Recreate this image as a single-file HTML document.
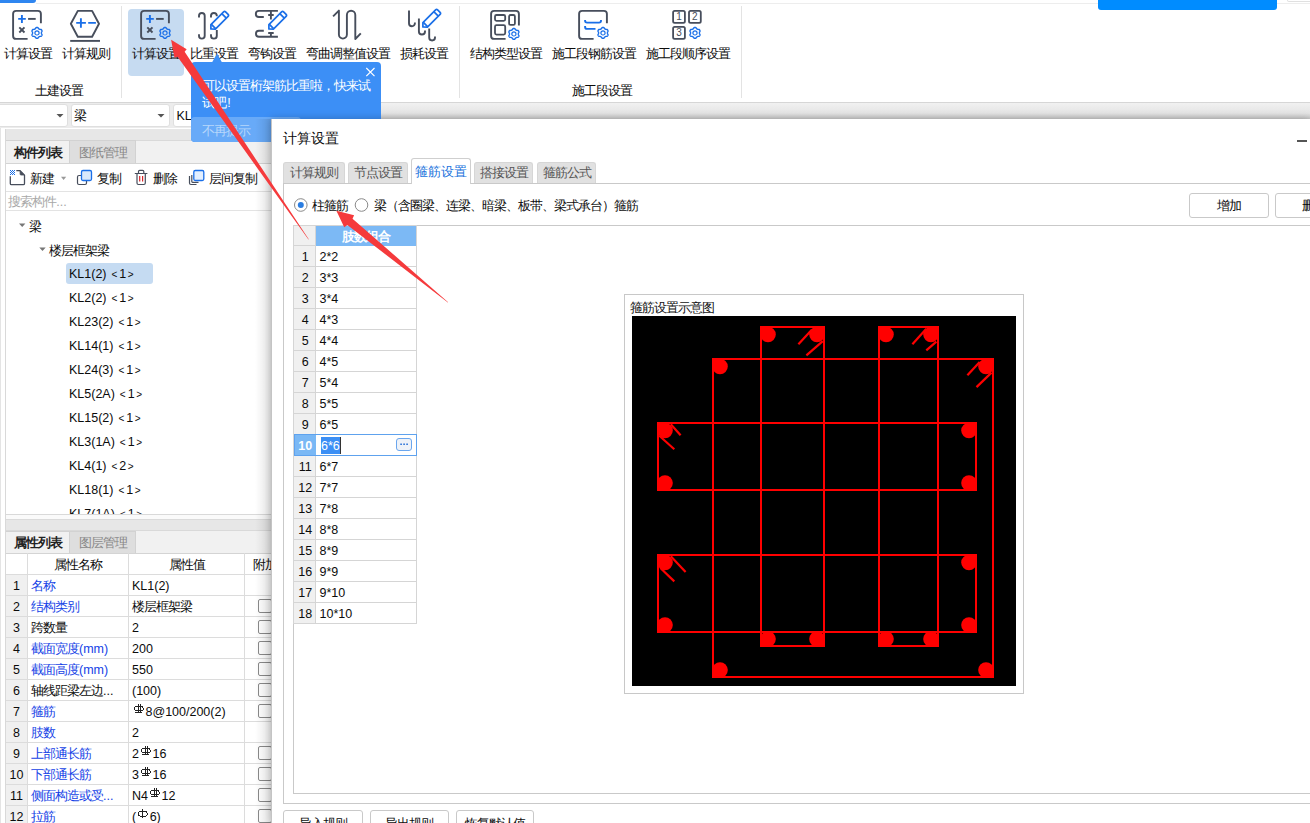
<!DOCTYPE html><html><head><meta charset="utf-8"><style>
*{box-sizing:border-box;margin:0;padding:0}
html,body{width:1310px;height:823px;overflow:hidden}
body{position:relative;background:#fff;font-family:"Liberation Sans",sans-serif;font-size:12.5px;color:#0c0c0c}
.a{position:absolute}
.t{position:absolute;white-space:nowrap;line-height:14px}
.c{letter-spacing:-1px}
.t[style*=bold] .c{-webkit-text-stroke:0}
.ab{font-size:10px;margin:0 2px 0 1.5px}
.sy{vertical-align:0;position:relative;top:-2px;margin:0 1.5px 0 2px;shape-rendering:crispEdges}
.ph{font-size:9px;position:relative;top:-3px;margin-right:1px}
</style></head><body>
<div class="a" style="left:0px;top:0px;width:36px;height:3px;background:#2f86f0;border-bottom-right-radius:3px"></div>
<div class="a" style="left:36px;top:3px;width:1274px;height:1px;background:#ededed"></div>
<div class="a" style="left:1098px;top:0px;width:179px;height:10px;background:#008cff;border-radius:0 0 3px 3px"></div>
<div class="a" style="left:1287px;top:0px;width:30px;height:2px;border:1px solid #e0e0e0;border-top:none;border-radius:0 0 2px 2px;background:#fff"></div>
<div class="a" style="left:128px;top:9px;width:56px;height:67px;background:#c6dbf1;border-radius:4px"></div>
<div class="a" style="left:121px;top:6px;width:1px;height:92px;background:#e3e3e3"></div>
<div class="a" style="left:459px;top:6px;width:1px;height:92px;background:#e3e3e3"></div>
<div class="a" style="left:741px;top:6px;width:1px;height:92px;background:#e3e3e3"></div>
<svg class="a" style="left:0;top:0" width="760" height="50"><g transform="translate(0,0)"><path d="M40.9,23.3 V13.85 Q40.9,10.85 37.9,10.85 H16.1 Q13.1,10.85 13.1,13.85 V35.9 Q13.1,38.9 16.1,38.9 H27.6" fill="none" stroke="#474e5c" stroke-width="1.9"/><path d="M18.2,18.9 H25.8 M21.9,15 V22.9" stroke="#1a6fe8" stroke-width="1.9"/><path d="M28.1,18.9 H35.7" stroke="#474e5c" stroke-width="1.9"/><path d="M19.3,27.3 L24.5,32.5 M24.5,27.3 L19.3,32.5" stroke="#474e5c" stroke-width="1.9"/><g transform="translate(37,32.9) scale(1.0)"><path d="M4.45,0.00 L4.45,0.23 L4.44,0.47 L4.45,0.71 L4.55,0.97 L4.78,1.28 L5.00,1.62 L5.03,1.93 L4.96,2.21 L4.85,2.47 L4.72,2.72 L4.57,2.97 L4.40,3.19 L4.19,3.39 L3.90,3.51 L3.50,3.50 L3.11,3.45 L2.84,3.50 L2.63,3.61 L2.43,3.73 L2.23,3.85 L2.02,3.97 L1.82,4.08 L1.62,4.21 L1.44,4.42 L1.28,4.78 L1.09,5.14 L0.84,5.32 L0.57,5.40 L0.29,5.44 L0.00,5.45 L-0.29,5.44 L-0.57,5.40 L-0.84,5.32 L-1.09,5.14 L-1.28,4.78 L-1.44,4.42 L-1.62,4.21 L-1.82,4.08 L-2.02,3.97 L-2.22,3.85 L-2.43,3.73 L-2.63,3.61 L-2.84,3.50 L-3.11,3.45 L-3.50,3.50 L-3.90,3.51 L-4.19,3.39 L-4.40,3.19 L-4.57,2.97 L-4.72,2.72 L-4.85,2.47 L-4.96,2.21 L-5.03,1.93 L-5.00,1.62 L-4.78,1.28 L-4.55,0.97 L-4.45,0.71 L-4.44,0.47 L-4.45,0.23 L-4.45,0.00 L-4.45,-0.23 L-4.44,-0.47 L-4.45,-0.71 L-4.55,-0.97 L-4.78,-1.28 L-5.00,-1.62 L-5.03,-1.93 L-4.96,-2.21 L-4.85,-2.47 L-4.72,-2.73 L-4.57,-2.97 L-4.40,-3.19 L-4.19,-3.39 L-3.90,-3.51 L-3.50,-3.50 L-3.11,-3.45 L-2.84,-3.50 L-2.63,-3.61 L-2.43,-3.73 L-2.23,-3.85 L-2.02,-3.97 L-1.82,-4.08 L-1.62,-4.21 L-1.44,-4.42 L-1.28,-4.78 L-1.09,-5.14 L-0.84,-5.32 L-0.57,-5.40 L-0.29,-5.44 L-0.00,-5.45 L0.29,-5.44 L0.57,-5.40 L0.84,-5.32 L1.09,-5.14 L1.28,-4.78 L1.44,-4.42 L1.62,-4.21 L1.82,-4.08 L2.02,-3.97 L2.23,-3.85 L2.43,-3.73 L2.63,-3.61 L2.84,-3.50 L3.11,-3.45 L3.50,-3.50 L3.90,-3.51 L4.19,-3.39 L4.40,-3.19 L4.57,-2.97 L4.72,-2.73 L4.85,-2.47 L4.96,-2.21 L5.03,-1.93 L5.00,-1.62 L4.78,-1.28 L4.55,-0.97 L4.45,-0.71 L4.44,-0.47 L4.45,-0.23Z" fill="none" stroke="#1a6fe8" stroke-width="1.4" stroke-linejoin="round"/><circle r="2.1" fill="none" stroke="#1a6fe8" stroke-width="1.2"/></g></g><g transform="translate(128,0)"><path d="M40.9,23.3 V13.85 Q40.9,10.85 37.9,10.85 H16.1 Q13.1,10.85 13.1,13.85 V35.9 Q13.1,38.9 16.1,38.9 H27.6" fill="none" stroke="#474e5c" stroke-width="1.9"/><path d="M18.2,18.9 H25.8 M21.9,15 V22.9" stroke="#1a6fe8" stroke-width="1.9"/><path d="M28.1,18.9 H35.7" stroke="#474e5c" stroke-width="1.9"/><path d="M19.3,27.3 L24.5,32.5 M24.5,27.3 L19.3,32.5" stroke="#474e5c" stroke-width="1.9"/><g transform="translate(37,32.9) scale(1.0)"><path d="M4.45,0.00 L4.45,0.23 L4.44,0.47 L4.45,0.71 L4.55,0.97 L4.78,1.28 L5.00,1.62 L5.03,1.93 L4.96,2.21 L4.85,2.47 L4.72,2.72 L4.57,2.97 L4.40,3.19 L4.19,3.39 L3.90,3.51 L3.50,3.50 L3.11,3.45 L2.84,3.50 L2.63,3.61 L2.43,3.73 L2.23,3.85 L2.02,3.97 L1.82,4.08 L1.62,4.21 L1.44,4.42 L1.28,4.78 L1.09,5.14 L0.84,5.32 L0.57,5.40 L0.29,5.44 L0.00,5.45 L-0.29,5.44 L-0.57,5.40 L-0.84,5.32 L-1.09,5.14 L-1.28,4.78 L-1.44,4.42 L-1.62,4.21 L-1.82,4.08 L-2.02,3.97 L-2.22,3.85 L-2.43,3.73 L-2.63,3.61 L-2.84,3.50 L-3.11,3.45 L-3.50,3.50 L-3.90,3.51 L-4.19,3.39 L-4.40,3.19 L-4.57,2.97 L-4.72,2.72 L-4.85,2.47 L-4.96,2.21 L-5.03,1.93 L-5.00,1.62 L-4.78,1.28 L-4.55,0.97 L-4.45,0.71 L-4.44,0.47 L-4.45,0.23 L-4.45,0.00 L-4.45,-0.23 L-4.44,-0.47 L-4.45,-0.71 L-4.55,-0.97 L-4.78,-1.28 L-5.00,-1.62 L-5.03,-1.93 L-4.96,-2.21 L-4.85,-2.47 L-4.72,-2.73 L-4.57,-2.97 L-4.40,-3.19 L-4.19,-3.39 L-3.90,-3.51 L-3.50,-3.50 L-3.11,-3.45 L-2.84,-3.50 L-2.63,-3.61 L-2.43,-3.73 L-2.23,-3.85 L-2.02,-3.97 L-1.82,-4.08 L-1.62,-4.21 L-1.44,-4.42 L-1.28,-4.78 L-1.09,-5.14 L-0.84,-5.32 L-0.57,-5.40 L-0.29,-5.44 L-0.00,-5.45 L0.29,-5.44 L0.57,-5.40 L0.84,-5.32 L1.09,-5.14 L1.28,-4.78 L1.44,-4.42 L1.62,-4.21 L1.82,-4.08 L2.02,-3.97 L2.23,-3.85 L2.43,-3.73 L2.63,-3.61 L2.84,-3.50 L3.11,-3.45 L3.50,-3.50 L3.90,-3.51 L4.19,-3.39 L4.40,-3.19 L4.57,-2.97 L4.72,-2.73 L4.85,-2.47 L4.96,-2.21 L5.03,-1.93 L5.00,-1.62 L4.78,-1.28 L4.55,-0.97 L4.45,-0.71 L4.44,-0.47 L4.45,-0.23Z" fill="none" stroke="#1a6fe8" stroke-width="1.4" stroke-linejoin="round"/><circle r="2.1" fill="none" stroke="#1a6fe8" stroke-width="1.2"/></g></g><path d="M70.85,23.8 L77.8,10.85 H92.1 L99,23.8 L92.1,36.7 H77.8 Z" fill="none" stroke="#474e5c" stroke-width="1.9" stroke-linejoin="round"/><path d="M76.2,22.9 H85.9 M80.9,18.2 V27.7 M88.2,22.9 H95.9" stroke="#1a6fe8" stroke-width="1.9"/><path d="M70.2,40.9 H100" stroke="#474e5c" stroke-width="1.9"/><path d="M199,17.6 V15.85 A2.85,2.85 0 0 1 204.7,15.85 V35.75 A2.85,2.85 0 0 1 199,35.75 V34.3" fill="none" stroke="#474e5c" stroke-width="1.9"/><path d="M211,17.6 V15.85 A2.9,2.9 0 0 1 216.8,15.85 V16.2 M216.8,29.9 V35.75 A2.9,2.9 0 0 1 211,35.75 V34.3" fill="none" stroke="#474e5c" stroke-width="1.9"/><g transform="translate(0,0)" fill="none" stroke="#1a6fe8" stroke-width="1.7" stroke-linejoin="round"><path d="M210.9,29 L210.9,24.6 L223.6,11.9 Q224.6,10.9 225.6,11.9 L228.1,14.4 Q229.1,15.4 228.1,16.4 L215.4,29.1 Z"/><path d="M221.8,13.7 L226.3,18.2 M211.4,24.4 L215.6,28.6"/></g><path d="M277.9,10.85 H258.9 A3.07,3.07 0 0 0 258.9,17 H263.8 M268.2,15 H273.7 M270.9,10.85 V19.5" fill="none" stroke="#474e5c" stroke-width="1.9"/><path d="M277.9,36.7 H258.9 A2.95,2.95 0 0 1 258.9,30.8 H263.8 M268.2,33 H273.7 M270.9,32.5 V36.7" fill="none" stroke="#474e5c" stroke-width="1.9"/><g transform="translate(58,0)" fill="none" stroke="#1a6fe8" stroke-width="1.7" stroke-linejoin="round"><path d="M210.9,29 L210.9,24.6 L223.6,11.9 Q224.6,10.9 225.6,11.9 L228.1,14.4 Q229.1,15.4 228.1,16.4 L215.4,29.1 Z"/><path d="M221.8,13.7 L226.3,18.2 M211.4,24.4 L215.6,28.6"/></g><path d="M333.1,16.4 L338.9,10.6 V34.6 A4,4 0 0 0 346.9,34.6 V15 A4.2,4.2 0 0 1 355.3,15 V39 L360.8,33.3" fill="none" stroke="#474e5c" stroke-width="1.9" stroke-linejoin="round"/><path d="M409,10.4 V23.35 A2.95,2.95 0 0 0 414.9,23.35 V22.4 M418.9,18.5 V31.45 A3.05,3.05 0 0 0 425,31.45 V30.5 M429.2,28.4 V37.6 A2.9,2.9 0 0 0 435,37.6 V36.5" fill="none" stroke="#474e5c" stroke-width="1.9"/><g transform="translate(212,-2)" fill="none" stroke="#1a6fe8" stroke-width="1.7" stroke-linejoin="round"><path d="M210.9,29 L210.9,24.6 L223.6,11.9 Q224.6,10.9 225.6,11.9 L228.1,14.4 Q229.1,15.4 228.1,16.4 L215.4,29.1 Z"/><path d="M221.8,13.7 L226.3,18.2 M211.4,24.4 L215.6,28.6"/></g><path d="M518.9,25.6 V13.85 Q518.9,10.85 515.9,10.85 H494.1 Q491.1,10.85 491.1,13.85 V35.9 Q491.1,38.9 494.1,38.9 H505.6" fill="none" stroke="#474e5c" stroke-width="1.9"/><rect x="495" y="15" width="10.2" height="5.8" rx="1.5" fill="none" stroke="#474e5c" stroke-width="1.8"/><rect x="509.1" y="15" width="5.8" height="9.9" rx="1.5" fill="none" stroke="#474e5c" stroke-width="1.8"/><rect x="495" y="25.2" width="10.2" height="9.4" rx="1.5" fill="none" stroke="#474e5c" stroke-width="1.8"/><g transform="translate(513.9,33.9) scale(1.0)"><path d="M4.45,0.00 L4.45,0.23 L4.44,0.47 L4.45,0.71 L4.55,0.97 L4.78,1.28 L5.00,1.62 L5.03,1.93 L4.96,2.21 L4.85,2.47 L4.72,2.72 L4.57,2.97 L4.40,3.19 L4.19,3.39 L3.90,3.51 L3.50,3.50 L3.11,3.45 L2.84,3.50 L2.63,3.61 L2.43,3.73 L2.23,3.85 L2.02,3.97 L1.82,4.08 L1.62,4.21 L1.44,4.42 L1.28,4.78 L1.09,5.14 L0.84,5.32 L0.57,5.40 L0.29,5.44 L0.00,5.45 L-0.29,5.44 L-0.57,5.40 L-0.84,5.32 L-1.09,5.14 L-1.28,4.78 L-1.44,4.42 L-1.62,4.21 L-1.82,4.08 L-2.02,3.97 L-2.22,3.85 L-2.43,3.73 L-2.63,3.61 L-2.84,3.50 L-3.11,3.45 L-3.50,3.50 L-3.90,3.51 L-4.19,3.39 L-4.40,3.19 L-4.57,2.97 L-4.72,2.72 L-4.85,2.47 L-4.96,2.21 L-5.03,1.93 L-5.00,1.62 L-4.78,1.28 L-4.55,0.97 L-4.45,0.71 L-4.44,0.47 L-4.45,0.23 L-4.45,0.00 L-4.45,-0.23 L-4.44,-0.47 L-4.45,-0.71 L-4.55,-0.97 L-4.78,-1.28 L-5.00,-1.62 L-5.03,-1.93 L-4.96,-2.21 L-4.85,-2.47 L-4.72,-2.73 L-4.57,-2.97 L-4.40,-3.19 L-4.19,-3.39 L-3.90,-3.51 L-3.50,-3.50 L-3.11,-3.45 L-2.84,-3.50 L-2.63,-3.61 L-2.43,-3.73 L-2.23,-3.85 L-2.02,-3.97 L-1.82,-4.08 L-1.62,-4.21 L-1.44,-4.42 L-1.28,-4.78 L-1.09,-5.14 L-0.84,-5.32 L-0.57,-5.40 L-0.29,-5.44 L-0.00,-5.45 L0.29,-5.44 L0.57,-5.40 L0.84,-5.32 L1.09,-5.14 L1.28,-4.78 L1.44,-4.42 L1.62,-4.21 L1.82,-4.08 L2.02,-3.97 L2.23,-3.85 L2.43,-3.73 L2.63,-3.61 L2.84,-3.50 L3.11,-3.45 L3.50,-3.50 L3.90,-3.51 L4.19,-3.39 L4.40,-3.19 L4.57,-2.97 L4.72,-2.73 L4.85,-2.47 L4.96,-2.21 L5.03,-1.93 L5.00,-1.62 L4.78,-1.28 L4.55,-0.97 L4.45,-0.71 L4.44,-0.47 L4.45,-0.23Z" fill="none" stroke="#1a6fe8" stroke-width="1.4" stroke-linejoin="round"/><circle r="2.1" fill="none" stroke="#1a6fe8" stroke-width="1.2"/></g><path d="M606.9,23.3 V13.85 Q606.9,10.85 603.9,10.85 H582.1 Q579.1,10.85 579.1,13.85 V35.9 Q579.1,38.9 582.1,38.9 H593.6" fill="none" stroke="#474e5c" stroke-width="1.9"/><path d="M585.1,20.1 V20.8 Q585.1,22.6 587.1,22.6 H599 Q601,22.6 601,20.8 V20.1 M585.1,26.1 V26.9 Q585.1,28.9 587.1,28.9 H595.5" fill="none" stroke="#1a6fe8" stroke-width="1.9"/><g transform="translate(603,32.9) scale(1.0)"><path d="M4.45,0.00 L4.45,0.23 L4.44,0.47 L4.45,0.71 L4.55,0.97 L4.78,1.28 L5.00,1.62 L5.03,1.93 L4.96,2.21 L4.85,2.47 L4.72,2.72 L4.57,2.97 L4.40,3.19 L4.19,3.39 L3.90,3.51 L3.50,3.50 L3.11,3.45 L2.84,3.50 L2.63,3.61 L2.43,3.73 L2.23,3.85 L2.02,3.97 L1.82,4.08 L1.62,4.21 L1.44,4.42 L1.28,4.78 L1.09,5.14 L0.84,5.32 L0.57,5.40 L0.29,5.44 L0.00,5.45 L-0.29,5.44 L-0.57,5.40 L-0.84,5.32 L-1.09,5.14 L-1.28,4.78 L-1.44,4.42 L-1.62,4.21 L-1.82,4.08 L-2.02,3.97 L-2.22,3.85 L-2.43,3.73 L-2.63,3.61 L-2.84,3.50 L-3.11,3.45 L-3.50,3.50 L-3.90,3.51 L-4.19,3.39 L-4.40,3.19 L-4.57,2.97 L-4.72,2.72 L-4.85,2.47 L-4.96,2.21 L-5.03,1.93 L-5.00,1.62 L-4.78,1.28 L-4.55,0.97 L-4.45,0.71 L-4.44,0.47 L-4.45,0.23 L-4.45,0.00 L-4.45,-0.23 L-4.44,-0.47 L-4.45,-0.71 L-4.55,-0.97 L-4.78,-1.28 L-5.00,-1.62 L-5.03,-1.93 L-4.96,-2.21 L-4.85,-2.47 L-4.72,-2.73 L-4.57,-2.97 L-4.40,-3.19 L-4.19,-3.39 L-3.90,-3.51 L-3.50,-3.50 L-3.11,-3.45 L-2.84,-3.50 L-2.63,-3.61 L-2.43,-3.73 L-2.23,-3.85 L-2.02,-3.97 L-1.82,-4.08 L-1.62,-4.21 L-1.44,-4.42 L-1.28,-4.78 L-1.09,-5.14 L-0.84,-5.32 L-0.57,-5.40 L-0.29,-5.44 L-0.00,-5.45 L0.29,-5.44 L0.57,-5.40 L0.84,-5.32 L1.09,-5.14 L1.28,-4.78 L1.44,-4.42 L1.62,-4.21 L1.82,-4.08 L2.02,-3.97 L2.23,-3.85 L2.43,-3.73 L2.63,-3.61 L2.84,-3.50 L3.11,-3.45 L3.50,-3.50 L3.90,-3.51 L4.19,-3.39 L4.40,-3.19 L4.57,-2.97 L4.72,-2.73 L4.85,-2.47 L4.96,-2.21 L5.03,-1.93 L5.00,-1.62 L4.78,-1.28 L4.55,-0.97 L4.45,-0.71 L4.44,-0.47 L4.45,-0.23Z" fill="none" stroke="#1a6fe8" stroke-width="1.4" stroke-linejoin="round"/><circle r="2.1" fill="none" stroke="#1a6fe8" stroke-width="1.2"/></g><rect x="673.1" y="10.85" width="11.8" height="12" rx="1.6" fill="none" stroke="#474e5c" stroke-width="1.8"/><text x="679.0" y="20.45" font-family="Liberation Sans" font-size="10" text-anchor="middle" fill="#474e5c">1</text><rect x="689" y="10.85" width="11.8" height="12" rx="1.6" fill="none" stroke="#474e5c" stroke-width="1.8"/><text x="694.9" y="20.45" font-family="Liberation Sans" font-size="10" text-anchor="middle" fill="#474e5c">2</text><rect x="673.1" y="26.8" width="11.8" height="12" rx="1.6" fill="none" stroke="#474e5c" stroke-width="1.8"/><text x="679.0" y="36.4" font-family="Liberation Sans" font-size="10" text-anchor="middle" fill="#474e5c">3</text><g transform="translate(695,32.9) scale(1.0)"><path d="M4.45,0.00 L4.45,0.23 L4.44,0.47 L4.45,0.71 L4.55,0.97 L4.78,1.28 L5.00,1.62 L5.03,1.93 L4.96,2.21 L4.85,2.47 L4.72,2.72 L4.57,2.97 L4.40,3.19 L4.19,3.39 L3.90,3.51 L3.50,3.50 L3.11,3.45 L2.84,3.50 L2.63,3.61 L2.43,3.73 L2.23,3.85 L2.02,3.97 L1.82,4.08 L1.62,4.21 L1.44,4.42 L1.28,4.78 L1.09,5.14 L0.84,5.32 L0.57,5.40 L0.29,5.44 L0.00,5.45 L-0.29,5.44 L-0.57,5.40 L-0.84,5.32 L-1.09,5.14 L-1.28,4.78 L-1.44,4.42 L-1.62,4.21 L-1.82,4.08 L-2.02,3.97 L-2.22,3.85 L-2.43,3.73 L-2.63,3.61 L-2.84,3.50 L-3.11,3.45 L-3.50,3.50 L-3.90,3.51 L-4.19,3.39 L-4.40,3.19 L-4.57,2.97 L-4.72,2.72 L-4.85,2.47 L-4.96,2.21 L-5.03,1.93 L-5.00,1.62 L-4.78,1.28 L-4.55,0.97 L-4.45,0.71 L-4.44,0.47 L-4.45,0.23 L-4.45,0.00 L-4.45,-0.23 L-4.44,-0.47 L-4.45,-0.71 L-4.55,-0.97 L-4.78,-1.28 L-5.00,-1.62 L-5.03,-1.93 L-4.96,-2.21 L-4.85,-2.47 L-4.72,-2.73 L-4.57,-2.97 L-4.40,-3.19 L-4.19,-3.39 L-3.90,-3.51 L-3.50,-3.50 L-3.11,-3.45 L-2.84,-3.50 L-2.63,-3.61 L-2.43,-3.73 L-2.23,-3.85 L-2.02,-3.97 L-1.82,-4.08 L-1.62,-4.21 L-1.44,-4.42 L-1.28,-4.78 L-1.09,-5.14 L-0.84,-5.32 L-0.57,-5.40 L-0.29,-5.44 L-0.00,-5.45 L0.29,-5.44 L0.57,-5.40 L0.84,-5.32 L1.09,-5.14 L1.28,-4.78 L1.44,-4.42 L1.62,-4.21 L1.82,-4.08 L2.02,-3.97 L2.23,-3.85 L2.43,-3.73 L2.63,-3.61 L2.84,-3.50 L3.11,-3.45 L3.50,-3.50 L3.90,-3.51 L4.19,-3.39 L4.40,-3.19 L4.57,-2.97 L4.72,-2.73 L4.85,-2.47 L4.96,-2.21 L5.03,-1.93 L5.00,-1.62 L4.78,-1.28 L4.55,-0.97 L4.45,-0.71 L4.44,-0.47 L4.45,-0.23Z" fill="none" stroke="#1a6fe8" stroke-width="1.4" stroke-linejoin="round"/><circle r="2.1" fill="none" stroke="#1a6fe8" stroke-width="1.2"/></g></svg>
<div class="t" style="left:-32.075px;top:47.0px;width:120px;text-align:center;"><span class="c">计算设置</span></div>
<div class="t" style="left:25.950000000000003px;top:47.0px;width:120px;text-align:center;"><span class="c">计算规则</span></div>
<div class="t" style="left:95.9px;top:47.0px;width:120px;text-align:center;"><span class="c">计算设置</span></div>
<div class="t" style="left:154.35000000000002px;top:47.0px;width:120px;text-align:center;"><span class="c">比重设置</span></div>
<div class="t" style="left:211.89999999999998px;top:47.0px;width:120px;text-align:center;"><span class="c">弯钩设置</span></div>
<div class="t" style="left:287.9px;top:47.0px;width:120px;text-align:center;"><span class="c">弯曲调整值设置</span></div>
<div class="t" style="left:363.9px;top:47.0px;width:120px;text-align:center;"><span class="c">损耗设置</span></div>
<div class="t" style="left:445.95px;top:47.0px;width:120px;text-align:center;"><span class="c">结构类型设置</span></div>
<div class="t" style="left:533.95px;top:47.0px;width:120px;text-align:center;"><span class="c">施工段钢筋设置</span></div>
<div class="t" style="left:628.0px;top:47.0px;width:120px;text-align:center;"><span class="c">施工段顺序设置</span></div>
<div class="t" style="left:-1.0px;top:84.2px;width:120px;text-align:center;"><span class="c">土建设置</span></div>
<div class="t" style="left:541.7px;top:83.5px;width:120px;text-align:center;"><span class="c">施工段设置</span></div>
<div class="a" style="left:0px;top:102px;width:1310px;height:1px;background:#d6d6d6"></div>
<div class="a" style="left:0px;top:103px;width:1310px;height:16px;background:linear-gradient(#f1f1f1,#e4e4e4 65%,#c9c9c9)"></div>
<div class="a" style="left:0px;top:103px;width:271px;height:25px;background:#ececec"></div>
<div class="a" style="left:-4px;top:104px;width:71.5px;height:22.5px;background:#fff;border:1px solid #dfdfdf;border-radius:3px"></div>
<div class="a" style="left:70.5px;top:104px;width:99px;height:22.5px;background:#fff;border:1px solid #dfdfdf;border-radius:3px"></div>
<div class="a" style="left:172.5px;top:104px;width:110px;height:22.5px;background:#fff;border:1px solid #dfdfdf;border-radius:3px"></div>
<svg class="a" style="left:55.5px;top:113px" width="8" height="5"><path d="M0.5,1 H7.5 L4,4.5Z" fill="#555"/></svg>
<svg class="a" style="left:157px;top:113px" width="8" height="5"><path d="M0.5,1 H7.5 L4,4.5Z" fill="#555"/></svg>
<div class="t" style="left:74px;top:109.2px;"><span class="c">梁</span></div>
<div class="t" style="left:176.5px;top:109.2px;">KL1(2)</div>
<div class="a" style="left:0px;top:128px;width:1px;height:695px;background:#e4e4e4"></div>
<div class="a" style="left:5px;top:129px;width:266px;height:694px;background:#fff;border-left:1px solid #d9d9d9"></div>
<div class="a" style="left:6px;top:129px;width:265px;height:11px;background:#e7e7e7"></div>
<div class="a" style="left:6px;top:140px;width:265px;height:23px;background:#f1f1f1;border-top:1px solid #d9d9d9"></div>
<div class="a" style="left:6px;top:140px;width:64px;height:23px;background:#f1f1f1;border:1px solid #d2d2d2;border-left:none;border-bottom:none"></div>
<div class="a" style="left:70px;top:140px;width:66px;height:23px;background:#dedede;border:1px solid #d2d2d2;border-left:none;border-bottom:none"></div>
<div class="a" style="left:6px;top:163px;width:265px;height:1px;background:#d4d4d4"></div>
<div class="t" style="left:-2.0px;top:146.1px;width:80px;text-align:center;font-weight:bold;color:#222;-webkit-text-stroke:0"><span class="c">构件列表</span></div>
<div class="t" style="left:63.400000000000006px;top:146.1px;width:80px;text-align:center;color:#888"><span class="c">图纸管理</span></div>
<svg class="a" style="left:0;top:0" width="271" height="200"><path d="M16.3,170.7 H20.1 L24.5,175.1 V183.4 Q24.5,184.6 23.3,184.6 H11.5 Q10.3,184.6 10.3,183.4 V176.3" fill="none" stroke="#474e5c" stroke-width="1.3" stroke-linejoin="round"/><path d="M20.1,170.9 V174.1 Q20.1,175 21,175 H24.3 Z" fill="#474e5c" stroke="#474e5c" stroke-width="0.8" stroke-linejoin="round"/><path d="M10,170 h1v1h-1z M12,170 h1v1h-1z M14,170 h1v1h-1z M11,171 h1v1h-1z M13,171 h1v1h-1z M10,172 h1v1h-1z M12,172 h1v1h-1z M14,172 h1v1h-1z M11,173 h1v1h-1z M13,173 h1v1h-1z M10,174 h1v1h-1z M12,174 h1v1h-1z M14,174 h1v1h-1z" fill="#1a6fe8"/><path d="M61,176.8 H66.2 L63.6,180Z" fill="#999"/><rect x="77.5" y="175.5" width="9" height="9" rx="1.5" fill="#fff" stroke="#474e5c" stroke-width="1.2"/><rect x="81.5" y="170.5" width="10" height="10" rx="1.5" fill="#d8e8fb" stroke="#1a6fe8" stroke-width="1.3"/><path d="M134.8,173.5 H147.4 M137,173.5 V183 Q137,184.5 138.5,184.5 H143.8 Q145.3,184.5 145.3,183 V173.5 M138.5,173.5 V171.5 Q138.5,170.3 139.7,170.3 H142.6 Q143.8,170.3 143.8,171.5 V173.5" fill="none" stroke="#474e5c" stroke-width="1.2"/><path d="M139.7,176 V181.5 M142.6,176 V181.5" stroke="#d9262a" stroke-width="1.2"/><path d="M189.5,176 V183 Q189.5,184.5 191,184.5 H196.5 M191.8,175 V181.5 Q191.8,182.3 192.6,182.3 H198.5" fill="none" stroke="#474e5c" stroke-width="1.2"/><rect x="193.8" y="170.5" width="10" height="10" rx="1.5" fill="#e3efff" stroke="#1a6fe8" stroke-width="1.3"/></svg>
<div class="t" style="left:30px;top:171.89999999999998px;"><span class="c">新建</span></div>
<div class="t" style="left:96.8px;top:171.89999999999998px;"><span class="c">复制</span></div>
<div class="t" style="left:152.9px;top:171.89999999999998px;"><span class="c">删除</span></div>
<div class="t" style="left:209px;top:171.89999999999998px;"><span class="c">层间复制</span></div>
<div class="a" style="left:6px;top:191px;width:265px;height:1px;background:#e3e3e3"></div>
<div class="t" style="left:8.2px;top:195.29999999999998px;color:#a8a8a8"><span class="c">搜索构件</span>...</div>
<div class="a" style="left:6px;top:210px;width:265px;height:1px;background:#e3e3e3"></div>
<svg class="a" style="left:0;top:0" width="271" height="260"><path d="M19,223.5 H25.4 L22.2,227Z M39.3,247.5 H45.7 L42.5,251Z" fill="#777"/></svg>
<div class="t" style="left:29px;top:219.5px;"><span class="c">梁</span></div>
<div class="t" style="left:49.3px;top:243.5px;"><span class="c">楼层框架梁</span></div>
<div class="a" style="left:66px;top:263px;width:87px;height:21px;background:#c5dbf2;border-radius:3px"></div>
<div class="a" style="left:6px;top:211px;width:265px;height:303px;overflow:hidden">
<div class="t" style="left:63px;top:55.500000000000014px">KL1(2)&nbsp;<span class="ab">&lt;</span>1<span class="ab">&gt;</span></div>
<div class="t" style="left:63px;top:79.50000000000001px">KL2(2)&nbsp;<span class="ab">&lt;</span>1<span class="ab">&gt;</span></div>
<div class="t" style="left:63px;top:103.50000000000001px">KL23(2)&nbsp;<span class="ab">&lt;</span>1<span class="ab">&gt;</span></div>
<div class="t" style="left:63px;top:127.50000000000001px">KL14(1)&nbsp;<span class="ab">&lt;</span>1<span class="ab">&gt;</span></div>
<div class="t" style="left:63px;top:151.5px">KL24(3)&nbsp;<span class="ab">&lt;</span>1<span class="ab">&gt;</span></div>
<div class="t" style="left:63px;top:175.5px">KL5(2A)&nbsp;<span class="ab">&lt;</span>1<span class="ab">&gt;</span></div>
<div class="t" style="left:63px;top:199.5px">KL15(2)&nbsp;<span class="ab">&lt;</span>1<span class="ab">&gt;</span></div>
<div class="t" style="left:63px;top:223.5px">KL3(1A)&nbsp;<span class="ab">&lt;</span>1<span class="ab">&gt;</span></div>
<div class="t" style="left:63px;top:247.5px">KL4(1)&nbsp;<span class="ab">&lt;</span>2<span class="ab">&gt;</span></div>
<div class="t" style="left:63px;top:271.5px">KL18(1)&nbsp;<span class="ab">&lt;</span>1<span class="ab">&gt;</span></div>
<div class="t" style="left:63px;top:295.49999999999994px">KL7(1A)&nbsp;<span class="ab">&lt;</span>1<span class="ab">&gt;</span></div>
</div>
<div class="a" style="left:5px;top:514px;width:266px;height:1px;background:#d9d9d9"></div>
<div class="a" style="left:6px;top:515px;width:265px;height:4px;background:#fafafa"></div>
<div class="a" style="left:6px;top:519px;width:265px;height:12px;background:#e7e7e7;border-top:1px solid #dadada"></div>
<div class="a" style="left:6px;top:530px;width:265px;height:23px;background:#f1f1f1;border-top:1px solid #d9d9d9"></div>
<div class="a" style="left:6px;top:531px;width:64px;height:22px;background:#f1f1f1;border:1px solid #d2d2d2;border-left:none;border-bottom:none"></div>
<div class="a" style="left:70px;top:531px;width:66px;height:22px;background:#dedede;border:1px solid #d2d2d2;border-left:none;border-bottom:none"></div>
<div class="t" style="left:-2.0px;top:536.4000000000001px;width:80px;text-align:center;font-weight:bold;color:#222;-webkit-text-stroke:0"><span class="c">属性列表</span></div>
<div class="t" style="left:63.099999999999994px;top:536.4000000000001px;width:80px;text-align:center;color:#888"><span class="c">图层管理</span></div>
<div class="a" style="left:6px;top:553px;width:265px;height:1px;background:#d4d4d4"></div>
<div class="a" style="left:6px;top:574px;width:21px;height:249px;background:#f0f0f0"></div>
<div class="a" style="left:27px;top:553px;width:1px;height:270px;background:#dcdcdc"></div>
<div class="a" style="left:128px;top:553px;width:1px;height:270px;background:#dcdcdc"></div>
<div class="a" style="left:244px;top:553px;width:1px;height:270px;background:#dcdcdc"></div>
<div class="a" style="left:6px;top:574px;width:265px;height:1px;background:#dcdcdc"></div>
<div class="a" style="left:6px;top:595px;width:265px;height:1px;background:#dcdcdc"></div>
<div class="a" style="left:6px;top:616px;width:265px;height:1px;background:#dcdcdc"></div>
<div class="a" style="left:6px;top:637px;width:265px;height:1px;background:#dcdcdc"></div>
<div class="a" style="left:6px;top:658px;width:265px;height:1px;background:#dcdcdc"></div>
<div class="a" style="left:6px;top:679px;width:265px;height:1px;background:#dcdcdc"></div>
<div class="a" style="left:6px;top:700px;width:265px;height:1px;background:#dcdcdc"></div>
<div class="a" style="left:6px;top:721px;width:265px;height:1px;background:#dcdcdc"></div>
<div class="a" style="left:6px;top:742px;width:265px;height:1px;background:#dcdcdc"></div>
<div class="a" style="left:6px;top:763px;width:265px;height:1px;background:#dcdcdc"></div>
<div class="a" style="left:6px;top:784px;width:265px;height:1px;background:#dcdcdc"></div>
<div class="a" style="left:6px;top:805px;width:265px;height:1px;background:#dcdcdc"></div>
<div class="a" style="left:6px;top:826px;width:265px;height:1px;background:#dcdcdc"></div>
<div class="t" style="left:28.0px;top:557.5px;width:100px;text-align:center;"><span class="c">属性名称</span></div>
<div class="t" style="left:136.5px;top:557.5px;width:100px;text-align:center;"><span class="c">属性值</span></div>
<div class="t" style="left:252.5px;top:557.5px;"><span class="c">附加</span></div>
<div class="t" style="left:6.5px;top:578.5px;width:20px;text-align:center;">1</div>
<div class="t" style="left:31px;top:578.5px;color:#1442e6"><span class="c">名称</span></div>
<div class="t" style="left:132px;top:578.5px;">KL1(2)</div>
<div class="t" style="left:6.5px;top:599.5px;width:20px;text-align:center;">2</div>
<div class="t" style="left:31px;top:599.5px;color:#1442e6"><span class="c">结构类别</span></div>
<div class="t" style="left:132px;top:599.5px;"><span class="c">楼层框架梁</span></div>
<div class="a" style="left:258.3px;top:599.1999999999999px;width:14px;height:14px;background:#fff;border:1px solid #8a8a8a;border-radius:2px"></div>
<div class="t" style="left:6.5px;top:620.5px;width:20px;text-align:center;">3</div>
<div class="t" style="left:31px;top:620.5px;"><span class="c">跨数量</span></div>
<div class="t" style="left:132px;top:620.5px;">2</div>
<div class="a" style="left:258.3px;top:620.1999999999999px;width:14px;height:14px;background:#fff;border:1px solid #8a8a8a;border-radius:2px"></div>
<div class="t" style="left:6.5px;top:641.5px;width:20px;text-align:center;">4</div>
<div class="t" style="left:31px;top:641.5px;color:#1442e6"><span class="c">截面宽度</span>(mm)</div>
<div class="t" style="left:132px;top:641.5px;">200</div>
<div class="a" style="left:258.3px;top:641.1999999999999px;width:14px;height:14px;background:#fff;border:1px solid #8a8a8a;border-radius:2px"></div>
<div class="t" style="left:6.5px;top:662.5px;width:20px;text-align:center;">5</div>
<div class="t" style="left:31px;top:662.5px;color:#1442e6"><span class="c">截面高度</span>(mm)</div>
<div class="t" style="left:132px;top:662.5px;">550</div>
<div class="a" style="left:258.3px;top:662.1999999999999px;width:14px;height:14px;background:#fff;border:1px solid #8a8a8a;border-radius:2px"></div>
<div class="t" style="left:6.5px;top:683.5px;width:20px;text-align:center;">6</div>
<div class="t" style="left:31px;top:683.5px;"><span class="c">轴线距梁左边</span>...</div>
<div class="t" style="left:132px;top:683.5px;">(100)</div>
<div class="a" style="left:258.3px;top:683.1999999999999px;width:14px;height:14px;background:#fff;border:1px solid #8a8a8a;border-radius:2px"></div>
<div class="t" style="left:6.5px;top:704.5px;width:20px;text-align:center;">7</div>
<div class="t" style="left:31px;top:704.5px;color:#1442e6"><span class="c">箍筋</span></div>
<div class="t" style="left:132px;top:704.5px;"><svg class="sy" width="10" height="10" viewBox="0 0 10 10"><rect x="0.6" y="2.6" width="8.6" height="4.2" rx="1.6" fill="none" stroke="#222" stroke-width="1"/><path d="M4,0.3 V8.6 M6,0.3 V8.6 M1.2,8.9 H8.4" stroke="#222" stroke-width="1"/></svg>8@100/200(2)</div>
<div class="a" style="left:258.3px;top:704.1999999999999px;width:14px;height:14px;background:#fff;border:1px solid #8a8a8a;border-radius:2px"></div>
<div class="t" style="left:6.5px;top:725.5px;width:20px;text-align:center;">8</div>
<div class="t" style="left:31px;top:725.5px;color:#1442e6"><span class="c">肢数</span></div>
<div class="t" style="left:132px;top:725.5px;">2</div>
<div class="t" style="left:6.5px;top:746.5px;width:20px;text-align:center;">9</div>
<div class="t" style="left:31px;top:746.5px;color:#1442e6"><span class="c">上部通长筋</span></div>
<div class="t" style="left:132px;top:746.5px;">2<svg class="sy" width="10" height="10" viewBox="0 0 10 10"><rect x="0.6" y="2.6" width="8.6" height="4.2" rx="1.6" fill="none" stroke="#222" stroke-width="1"/><path d="M4,0.3 V8.6 M6,0.3 V8.6 M1.2,8.9 H8.4" stroke="#222" stroke-width="1"/></svg>16</div>
<div class="a" style="left:258.3px;top:746.1999999999999px;width:14px;height:14px;background:#fff;border:1px solid #8a8a8a;border-radius:2px"></div>
<div class="t" style="left:6.5px;top:767.5px;width:20px;text-align:center;">10</div>
<div class="t" style="left:31px;top:767.5px;color:#1442e6"><span class="c">下部通长筋</span></div>
<div class="t" style="left:132px;top:767.5px;">3<svg class="sy" width="10" height="10" viewBox="0 0 10 10"><rect x="0.6" y="2.6" width="8.6" height="4.2" rx="1.6" fill="none" stroke="#222" stroke-width="1"/><path d="M4,0.3 V8.6 M6,0.3 V8.6 M1.2,8.9 H8.4" stroke="#222" stroke-width="1"/></svg>16</div>
<div class="a" style="left:258.3px;top:767.1999999999999px;width:14px;height:14px;background:#fff;border:1px solid #8a8a8a;border-radius:2px"></div>
<div class="t" style="left:6.5px;top:788.5px;width:20px;text-align:center;">11</div>
<div class="t" style="left:31px;top:788.5px;color:#1442e6"><span class="c">侧面构造或受</span>...</div>
<div class="t" style="left:132px;top:788.5px;">N4<svg class="sy" width="10" height="10" viewBox="0 0 10 10"><rect x="0.6" y="2.6" width="8.6" height="4.2" rx="1.6" fill="none" stroke="#222" stroke-width="1"/><path d="M4,0.3 V8.6 M6,0.3 V8.6 M1.2,8.9 H8.4" stroke="#222" stroke-width="1"/></svg>12</div>
<div class="a" style="left:258.3px;top:788.1999999999999px;width:14px;height:14px;background:#fff;border:1px solid #8a8a8a;border-radius:2px"></div>
<div class="t" style="left:6.5px;top:809.5px;width:20px;text-align:center;">12</div>
<div class="t" style="left:31px;top:809.5px;color:#1442e6"><span class="c">拉筋</span></div>
<div class="t" style="left:132px;top:809.5px;">(<svg class="sy" width="10" height="10" viewBox="0 0 10 10"><rect x="0.6" y="2.6" width="8.6" height="4.4" rx="1.6" fill="none" stroke="#222" stroke-width="1"/><path d="M4.9,0.3 V9.3" stroke="#222" stroke-width="1"/></svg>6)</div>
<div class="a" style="left:258.3px;top:809.1999999999999px;width:14px;height:14px;background:#fff;border:1px solid #8a8a8a;border-radius:2px"></div>
<svg class="a" style="left:205px;top:50px" width="24" height="14"><path d="M7,12.5 L12,3.5 L17,12.5Z" fill="#3c8ff6"/></svg>
<div class="a" style="left:191px;top:62px;width:190px;height:80px;background:#3c8ff6;border-radius:4px"></div>
<div class="a" style="left:191px;top:117px;width:110px;height:25px;background:#68aaf8;border-radius:4px 4px 0 4px"></div>
<div class="t" style="left:201.8px;top:79.2px;color:#fff"><span class="c">可以设置桁架筋比重啦，快来试</span></div>
<div class="t" style="left:201.8px;top:96.2px;color:#fff"><span class="c">试吧</span><span style="margin-left:1.5px">!</span></div>
<div class="t" style="left:201.8px;top:123.50000000000001px;color:#b6d6fb"><span class="c">不再提示</span></div>
<svg class="a" style="left:362px;top:64px" width="16" height="16"><path d="M4.3,4 L12.5,12.2 M12.5,4 L4.3,12.2" stroke="#fff" stroke-width="1.2"/></svg>
<div class="a" style="left:255px;top:119px;width:16px;height:704px;background:linear-gradient(to right,rgba(0,0,0,0),rgba(0,0,0,0.10))"></div>
<div class="a" style="left:271px;top:119px;width:1039px;height:704px;background:#fff;box-shadow:0 0 8px rgba(0,0,0,0.25);border-left:1px solid #c4c4c4"></div>
<div class="t" style="left:283px;top:129.5px;font-size:14px;line-height:16px">计算设置</div>
<div class="a" style="left:1297px;top:140px;width:10px;height:1.5px;background:#555"></div>
<div class="a" style="left:283.4px;top:162px;width:61.60000000000002px;height:21px;background:#e1e1e1;border:1px solid #d6d6d6;border-bottom:none;border-radius:3px 3px 0 0"></div>
<div class="t" style="left:274.2px;top:166.2px;width:80px;text-align:center;color:#555"><span class="c">计算规则</span></div>
<div class="a" style="left:348px;top:162px;width:59.5px;height:21px;background:#e1e1e1;border:1px solid #d6d6d6;border-bottom:none;border-radius:3px 3px 0 0"></div>
<div class="t" style="left:337.75px;top:166.2px;width:80px;text-align:center;color:#555"><span class="c">节点设置</span></div>
<div class="a" style="left:411.3px;top:158.4px;width:59.39999999999998px;height:26px;background:#fff;border:1px solid #cfcfcf;border-bottom:none;border-radius:3px 3px 0 0;z-index:2"></div>
<div class="t" style="left:411.3px;top:164.5px;width:59.39999999999998px;text-align:center;color:#2072dc;z-index:3">箍筋设置</div>
<div class="a" style="left:474px;top:162px;width:59px;height:21px;background:#e1e1e1;border:1px solid #d6d6d6;border-bottom:none;border-radius:3px 3px 0 0"></div>
<div class="t" style="left:463.5px;top:166.2px;width:80px;text-align:center;color:#555"><span class="c">搭接设置</span></div>
<div class="a" style="left:537px;top:162px;width:59px;height:21px;background:#e1e1e1;border:1px solid #d6d6d6;border-bottom:none;border-radius:3px 3px 0 0"></div>
<div class="t" style="left:526.5px;top:166.2px;width:80px;text-align:center;color:#555"><span class="c">箍筋公式</span></div>
<div class="a" style="left:283px;top:183px;width:1040px;height:621px;border:1px solid #c9c9c9"></div>
<svg class="a" style="left:290px;top:195px" width="90" height="20"><circle cx="10.8" cy="10" r="6.3" fill="#fff" stroke="#8a8a8a" stroke-width="1"/><circle cx="10.8" cy="10" r="3" fill="#2a7de1"/><circle cx="71.5" cy="10" r="6.3" fill="#fff" stroke="#8a8a8a" stroke-width="1"/></svg>
<div class="t" style="left:312px;top:198.7px;"><span class="c">柱箍筋</span></div>
<div class="t" style="left:373.5px;top:198.7px;"><span class="c">梁（含圈梁、连梁、暗梁、板带、梁式承台）箍筋</span></div>
<div class="a" style="left:1189px;top:193px;width:80px;height:25px;background:#fff;border:1px solid #c9c9c9;border-radius:3px"></div>
<div class="t" style="left:1189.0px;top:199.2px;width:80px;text-align:center;"><span class="c">增加</span></div>
<div class="a" style="left:1275px;top:193px;width:80px;height:25px;background:#fff;border:1px solid #c9c9c9;border-radius:3px"></div>
<div class="t" style="left:1302px;top:199.2px;"><span class="c">删除</span></div>
<div class="a" style="left:293px;top:225px;width:1030px;height:569px;border:1px solid #c9c9c9"></div>
<div class="a" style="left:293px;top:225px;width:124px;height:399px;background:#fff"></div>
<div class="a" style="left:293px;top:225px;width:22px;height:399px;background:#f0f0f0"></div>
<div class="a" style="left:315px;top:226px;width:101px;height:20px;background:#7cb9f5"></div>
<div class="a" style="left:293px;top:245px;width:22px;height:1px;background:#d5d5d5"></div>
<div class="a" style="left:293px;top:266px;width:124px;height:1px;background:#d5d5d5"></div>
<div class="a" style="left:293px;top:287px;width:124px;height:1px;background:#d5d5d5"></div>
<div class="a" style="left:293px;top:308px;width:124px;height:1px;background:#d5d5d5"></div>
<div class="a" style="left:293px;top:329px;width:124px;height:1px;background:#d5d5d5"></div>
<div class="a" style="left:293px;top:350px;width:124px;height:1px;background:#d5d5d5"></div>
<div class="a" style="left:293px;top:371px;width:124px;height:1px;background:#d5d5d5"></div>
<div class="a" style="left:293px;top:392px;width:124px;height:1px;background:#d5d5d5"></div>
<div class="a" style="left:293px;top:413px;width:124px;height:1px;background:#d5d5d5"></div>
<div class="a" style="left:293px;top:434px;width:124px;height:1px;background:#d5d5d5"></div>
<div class="a" style="left:293px;top:455px;width:124px;height:1px;background:#d5d5d5"></div>
<div class="a" style="left:293px;top:476px;width:124px;height:1px;background:#d5d5d5"></div>
<div class="a" style="left:293px;top:497px;width:124px;height:1px;background:#d5d5d5"></div>
<div class="a" style="left:293px;top:518px;width:124px;height:1px;background:#d5d5d5"></div>
<div class="a" style="left:293px;top:539px;width:124px;height:1px;background:#d5d5d5"></div>
<div class="a" style="left:293px;top:560px;width:124px;height:1px;background:#d5d5d5"></div>
<div class="a" style="left:293px;top:581px;width:124px;height:1px;background:#d5d5d5"></div>
<div class="a" style="left:293px;top:602px;width:124px;height:1px;background:#d5d5d5"></div>
<div class="a" style="left:293px;top:623px;width:124px;height:1px;background:#d5d5d5"></div>
<div class="a" style="left:293px;top:225px;width:124px;height:1px;background:#d5d5d5"></div>
<div class="a" style="left:293px;top:225px;width:1px;height:399px;background:#d5d5d5"></div>
<div class="a" style="left:315px;top:225px;width:1px;height:399px;background:#d5d5d5"></div>
<div class="a" style="left:416px;top:225px;width:1px;height:399px;background:#d5d5d5"></div>
<div class="t" style="left:316.0px;top:229.89999999999998px;width:100px;text-align:center;color:#fff;font-weight:bold;-webkit-text-stroke:0"><span class="c">肢数组合</span></div>
<div class="t" style="left:294.3px;top:249.7px;width:22px;text-align:center;">1</div>
<div class="t" style="left:319.5px;top:249.7px;">2*2</div>
<div class="t" style="left:294.3px;top:270.7px;width:22px;text-align:center;">2</div>
<div class="t" style="left:319.5px;top:270.7px;">3*3</div>
<div class="t" style="left:294.3px;top:291.7px;width:22px;text-align:center;">3</div>
<div class="t" style="left:319.5px;top:291.7px;">3*4</div>
<div class="t" style="left:294.3px;top:312.7px;width:22px;text-align:center;">4</div>
<div class="t" style="left:319.5px;top:312.7px;">4*3</div>
<div class="t" style="left:294.3px;top:333.7px;width:22px;text-align:center;">5</div>
<div class="t" style="left:319.5px;top:333.7px;">4*4</div>
<div class="t" style="left:294.3px;top:354.7px;width:22px;text-align:center;">6</div>
<div class="t" style="left:319.5px;top:354.7px;">4*5</div>
<div class="t" style="left:294.3px;top:375.7px;width:22px;text-align:center;">7</div>
<div class="t" style="left:319.5px;top:375.7px;">5*4</div>
<div class="t" style="left:294.3px;top:396.7px;width:22px;text-align:center;">8</div>
<div class="t" style="left:319.5px;top:396.7px;">5*5</div>
<div class="t" style="left:294.3px;top:417.7px;width:22px;text-align:center;">9</div>
<div class="t" style="left:319.5px;top:417.7px;">6*5</div>
<div class="a" style="left:293.5px;top:434px;width:123.5px;height:21.5px;background:#fff"></div>
<div class="a" style="left:293.5px;top:434px;width:22px;height:21.5px;background:#7ab8f5"></div>
<div class="a" style="left:293.5px;top:434px;width:123.5px;height:21.5px;border:1.5px solid #5ea2ee"></div>
<div class="t" style="left:290.3px;top:438.5px;width:30px;text-align:center;color:#fff;font-weight:bold;-webkit-text-stroke:0">10</div>
<div class="a" style="left:321px;top:437.4px;width:19.6px;height:16.4px;background:#3b8ff5"></div>
<div class="t" style="left:321px;top:438.5px;color:#fff">6*6</div>
<div class="a" style="left:340px;top:437.4px;width:1px;height:16.4px;background:#333"></div>
<div class="a" style="left:396px;top:438.4px;width:15.5px;height:12.4px;background:#eef2f8;border:1px solid #6aa6ee;border-radius:3px"></div>
<svg class="a" style="left:396px;top:438px" width="16" height="13"><path d="M4.3,6.2 h1.6 M7.3,6.2 h1.6 M10.3,6.2 h1.6" stroke="#2a72d8" stroke-width="1.6"/></svg>
<div class="t" style="left:294.3px;top:459.7px;width:22px;text-align:center;">11</div>
<div class="t" style="left:319.5px;top:459.7px;">6*7</div>
<div class="t" style="left:294.3px;top:480.7px;width:22px;text-align:center;">12</div>
<div class="t" style="left:319.5px;top:480.7px;">7*7</div>
<div class="t" style="left:294.3px;top:501.7px;width:22px;text-align:center;">13</div>
<div class="t" style="left:319.5px;top:501.7px;">7*8</div>
<div class="t" style="left:294.3px;top:522.7px;width:22px;text-align:center;">14</div>
<div class="t" style="left:319.5px;top:522.7px;">8*8</div>
<div class="t" style="left:294.3px;top:543.7px;width:22px;text-align:center;">15</div>
<div class="t" style="left:319.5px;top:543.7px;">8*9</div>
<div class="t" style="left:294.3px;top:564.7px;width:22px;text-align:center;">16</div>
<div class="t" style="left:319.5px;top:564.7px;">9*9</div>
<div class="t" style="left:294.3px;top:585.7px;width:22px;text-align:center;">17</div>
<div class="t" style="left:319.5px;top:585.7px;">9*10</div>
<div class="t" style="left:294.3px;top:606.7px;width:22px;text-align:center;">18</div>
<div class="t" style="left:319.5px;top:606.7px;">10*10</div>
<div class="a" style="left:624px;top:294px;width:400px;height:400px;border:1px solid #c8c8c8;background:#fff"></div>
<div class="t" style="left:630px;top:301.2px;color:#111"><span class="c">箍筋设置示意图</span></div>
<div class="a" style="left:632px;top:316px;width:384px;height:370px;background:#000"></div>
<svg class="a" style="left:0;top:0" width="1310" height="823" style="pointer-events:none"><path d="M761,327 H824 V646 H761 Z" fill="none" stroke="#ff0000" stroke-width="2"/><path d="M879,327 H938 V646 H879 Z" fill="none" stroke="#ff0000" stroke-width="2"/><path d="M713,359 H993 V677 H713 Z" fill="none" stroke="#ff0000" stroke-width="2"/><path d="M658,423 H976 V490 H658 Z" fill="none" stroke="#ff0000" stroke-width="2"/><path d="M658,555 H976 V632 H658 Z" fill="none" stroke="#ff0000" stroke-width="2"/><circle cx="768" cy="334.5" r="7.8" fill="#ff0000"/><circle cx="817" cy="334.5" r="7.8" fill="#ff0000"/><circle cx="768" cy="639" r="7.8" fill="#ff0000"/><circle cx="817" cy="639" r="7.8" fill="#ff0000"/><path d="M760,327 h1 v-1 h7 v8.5 h-8Z M825,327 h-1 v-1 h-7 v8.5 h8Z M760,646 h1 v1 h7 v-8 h-8Z M825,646 h-1 v1 h-7 v-8 h8Z" fill="#ff0000"/><circle cx="886" cy="334.5" r="7.8" fill="#ff0000"/><circle cx="931" cy="334.5" r="7.8" fill="#ff0000"/><circle cx="886" cy="639" r="7.8" fill="#ff0000"/><circle cx="931" cy="639" r="7.8" fill="#ff0000"/><path d="M878,327 h1 v-1 h7 v8.5 h-8Z M939,327 h-1 v-1 h-7 v8.5 h8Z M878,646 h1 v1 h7 v-8 h-8Z M939,646 h-1 v1 h-7 v-8 h8Z" fill="#ff0000"/><circle cx="720" cy="366.5" r="7.8" fill="#ff0000"/><circle cx="986" cy="366.5" r="7.8" fill="#ff0000"/><circle cx="720" cy="670" r="7.8" fill="#ff0000"/><circle cx="986" cy="670" r="7.8" fill="#ff0000"/><path d="M712,359 h1 v-1 h7 v8.5 h-8Z M994,359 h-1 v-1 h-7 v8.5 h8Z M712,677 h1 v1 h7 v-8 h-8Z M994,677 h-1 v1 h-7 v-8 h8Z" fill="#ff0000"/><circle cx="665" cy="430.5" r="7.8" fill="#ff0000"/><circle cx="969" cy="430.5" r="7.8" fill="#ff0000"/><circle cx="665" cy="483" r="7.8" fill="#ff0000"/><circle cx="969" cy="483" r="7.8" fill="#ff0000"/><path d="M657,423 h1 v-1 h7 v8.5 h-8Z M977,423 h-1 v-1 h-7 v8.5 h8Z M657,490 h1 v1 h7 v-8 h-8Z M977,490 h-1 v1 h-7 v-8 h8Z" fill="#ff0000"/><circle cx="665" cy="562.5" r="7.8" fill="#ff0000"/><circle cx="969" cy="562.5" r="7.8" fill="#ff0000"/><circle cx="665" cy="625" r="7.8" fill="#ff0000"/><circle cx="969" cy="625" r="7.8" fill="#ff0000"/><path d="M657,555 h1 v-1 h7 v8.5 h-8Z M977,555 h-1 v-1 h-7 v8.5 h8Z M657,632 h1 v1 h7 v-8 h-8Z M977,632 h-1 v1 h-7 v-8 h8Z" fill="#ff0000"/><path d="M798.4,344.2 L811.8,329.7" stroke="#ff0000" stroke-width="2.2"/><path d="M806.4,355.3 L822.8,341.2" stroke="#ff0000" stroke-width="2.2"/><path d="M912.4,344.3 L926.3,328.8" stroke="#ff0000" stroke-width="2.2"/><path d="M926.3,350.4 L936.4,341.6" stroke="#ff0000" stroke-width="2.2"/><path d="M967.4,375.3 L979.7,362" stroke="#ff0000" stroke-width="2.2"/><path d="M976.5,387.1 L991.5,372.6" stroke="#ff0000" stroke-width="2.2"/><path d="M670.8,424.3 L680.6,435.2" stroke="#ff0000" stroke-width="2.2"/><path d="M659.3,435.8 L674.3,449.2" stroke="#ff0000" stroke-width="2.2"/><path d="M670.8,556.2 L685.6,572.1" stroke="#ff0000" stroke-width="2.2"/><path d="M660.4,568 L674.3,581.4" stroke="#ff0000" stroke-width="2.2"/></svg>
<div class="a" style="left:283px;top:810px;width:80px;height:20px;background:#fff;border:1px solid #c9c9c9;border-radius:3px"></div>
<div class="t" style="left:278.0px;top:816.7px;width:90px;text-align:center;"><span class="c">导入规则</span></div>
<div class="a" style="left:369.5px;top:810px;width:79.0px;height:20px;background:#fff;border:1px solid #c9c9c9;border-radius:3px"></div>
<div class="t" style="left:364.0px;top:816.7px;width:90px;text-align:center;"><span class="c">导出规则</span></div>
<div class="a" style="left:455.6px;top:810px;width:78.89999999999998px;height:20px;background:#fff;border:1px solid #c9c9c9;border-radius:3px"></div>
<div class="t" style="left:450.05px;top:816.7px;width:90px;text-align:center;"><span class="c">恢复默认值</span></div>
<svg class="a" style="left:0;top:0" width="1310" height="823"><path d="M171.10,39.80 L186.67,49.35 L184.63,51.85 L308.76,239.19 L308.44,239.41 L177.55,56.73 L174.48,57.75Z" fill="#f53a3c"/><path d="M336.40,210.70 L354.10,215.14 L352.53,218.63 L448.13,302.15 L447.87,302.45 L347.33,224.97 L344.21,227.20Z" fill="#f53a3c"/></svg>
</body></html>
